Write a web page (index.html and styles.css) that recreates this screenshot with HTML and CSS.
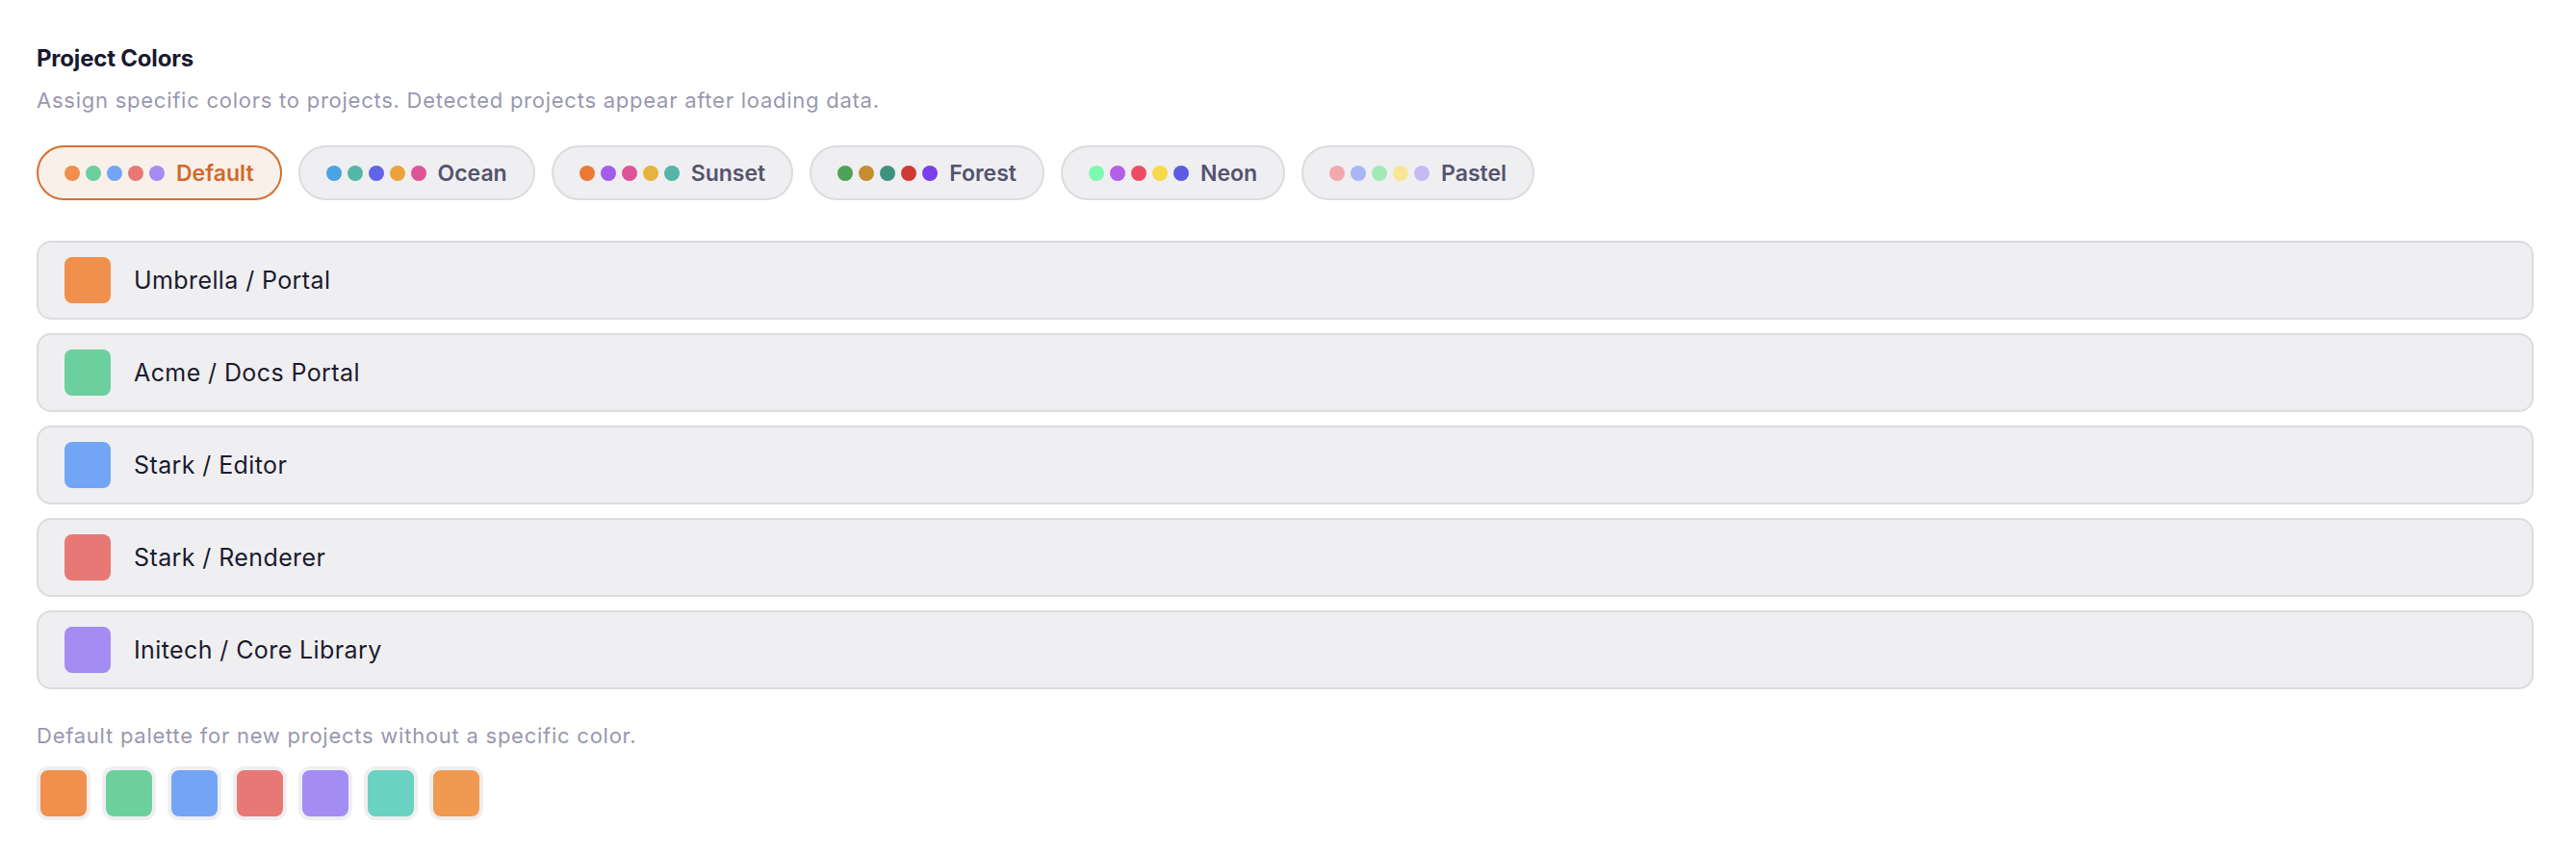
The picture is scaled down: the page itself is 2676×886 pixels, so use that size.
FILE: index.html
```html
<!DOCTYPE html>
<html lang="en">
<head>
<meta charset="utf-8">
<title>Project Colors</title>
<link rel="stylesheet" href="styles.css">
</head>
<body>
<section class="settings">
  <h2 class="title">Project Colors</h2>
  <p class="hint">Assign specific colors to projects. Detected projects appear after loading data.</p>

  <div class="presets">
    <button class="preset active">
      <span class="dots"><i style="background:#f0904c"></i><i style="background:#6bd09e"></i><i style="background:#72a5f5"></i><i style="background:#e87875"></i><i style="background:#a38cf2"></i></span>
      <span class="label">Default</span>
    </button>
    <button class="preset">
      <span class="dots"><i style="background:#4aa3e4"></i><i style="background:#52b7a6"></i><i style="background:#6263e8"></i><i style="background:#eba23c"></i><i style="background:#df5496"></i></span>
      <span class="label">Ocean</span>
    </button>
    <button class="preset">
      <span class="dots"><i style="background:#ea7a35"></i><i style="background:#a45ceb"></i><i style="background:#df5497"></i><i style="background:#e4b43f"></i><i style="background:#52b7a6"></i></span>
      <span class="label">Sunset</span>
    </button>
    <button class="preset">
      <span class="dots"><i style="background:#4ea155"></i><i style="background:#c68c30"></i><i style="background:#3f9282"></i><i style="background:#cf3a36"></i><i style="background:#7a3fe8"></i></span>
      <span class="label">Forest</span>
    </button>
    <button class="preset">
      <span class="dots"><i style="background:#7cfbb0"></i><i style="background:#b45fe9"></i><i style="background:#ee4c63"></i><i style="background:#f9d94a"></i><i style="background:#5c5be1"></i></span>
      <span class="label">Neon</span>
    </button>
    <button class="preset">
      <span class="dots"><i style="background:#f2a9ae"></i><i style="background:#a9b6f6"></i><i style="background:#a2e9b6"></i><i style="background:#f8e596"></i><i style="background:#c7b9f6"></i></span>
      <span class="label">Pastel</span>
    </button>
  </div>

  <ul class="projects">
    <li class="project"><span class="swatch" style="background:#f0904c"></span><span class="name">Umbrella / Portal</span></li>
    <li class="project"><span class="swatch" style="background:#6bd09e"></span><span class="name">Acme / Docs Portal</span></li>
    <li class="project"><span class="swatch" style="background:#72a5f5"></span><span class="name">Stark / Editor</span></li>
    <li class="project"><span class="swatch" style="background:#e87875"></span><span class="name">Stark / Renderer</span></li>
    <li class="project"><span class="swatch" style="background:#a38cf2"></span><span class="name">Initech / Core Library</span></li>
  </ul>

  <p class="hint footer">Default palette for new projects without a specific color.</p>
  <div class="palette">
    <span class="chip" style="background:#f0904c"></span>
    <span class="chip" style="background:#6bd09e"></span>
    <span class="chip" style="background:#72a5f5"></span>
    <span class="chip" style="background:#e87875"></span>
    <span class="chip" style="background:#a38cf2"></span>
    <span class="chip" style="background:#6ad2c1"></span>
    <span class="chip" style="background:#ef9a50"></span>
  </div>
</section>
</body>
</html>
```

FILE: styles.css
```css
* { box-sizing: border-box; }

html, body {
  margin: 0;
  padding: 0;
  background: #ffffff;
}

body {
  font-family: "Inter", "Noto Sans", sans-serif;
  color: #1c1b2e;
}

.settings {
  padding: 47px 44px 0 38px;
}

.title {
  margin: 0;
  font-size: 24px;
  line-height: 28px;
  font-weight: 700;
  letter-spacing: -0.2px;
  color: #1a1a2d;
}

.hint {
  margin: 16px 0 0;
  font-size: 22px;
  line-height: 26px;
  letter-spacing: 0.75px;
  color: #9998af;
}

.presets {
  display: flex;
  gap: 17px;
  margin-top: 34px;
}

.preset {
  display: inline-flex;
  align-items: center;
  gap: 12px;
  height: 57px;
  padding: 0 27px;
  border: 2px solid #dcdce0;
  border-radius: 29px;
  background: #efeff1;
  font-family: inherit;
  font-size: 23px;
  font-weight: 600;
  color: #55536f;
  cursor: pointer;
}

.preset.active {
  border-color: #d3702f;
  background: #faf0ea;
  color: #d06a2b;
}

.dots {
  display: inline-flex;
  gap: 6px;
}

.dots i {
  display: block;
  width: 16px;
  height: 16px;
  border-radius: 50%;
}

.label {
  line-height: 1;
  padding-top: 2px;
}

.projects {
  list-style: none;
  margin: 42px 0 0;
  padding: 0;
  display: flex;
  flex-direction: column;
  gap: 14px;
}

.project {
  display: flex;
  align-items: center;
  gap: 24px;
  padding: 15px 27px;
  border: 2px solid #dcdce0;
  border-radius: 15px;
  background: #efeff1;
}

.swatch {
  width: 48px;
  height: 48px;
  border-radius: 8px;
  flex: none;
}

.name {
  font-size: 25px;
  line-height: 30px;
  letter-spacing: 0.4px;
  color: #1c1b2e;
}

.hint.footer {
  margin-top: 35px;
  font-size: 22px;
}

.palette {
  display: flex;
  gap: 12px;
  margin-top: 19px;
}

.chip {
  width: 56px;
  height: 56px;
  border: 4px solid #efeff1;
  border-radius: 12px;
}
```
